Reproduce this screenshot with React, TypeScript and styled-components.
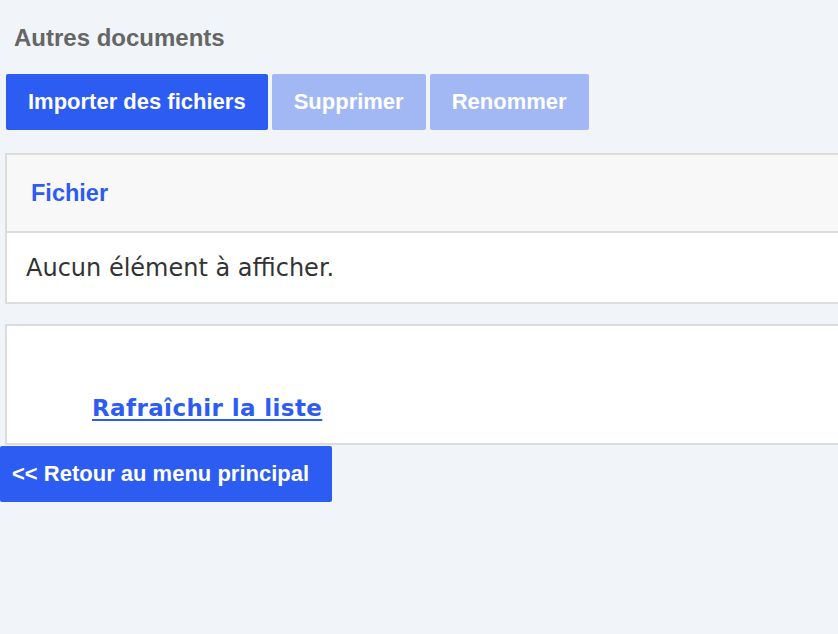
import React from 'react';
import styled, { createGlobalStyle } from 'styled-components';

const GlobalStyle = createGlobalStyle`
  html, body {
    margin: 0;
    padding: 0;
    background: #f1f5fa;
    overflow: hidden;
  }
  body {
    font-family: 'Liberation Sans', Arial, sans-serif;
  }
`;

const Page = styled.div`
  width: 838px;
  height: 634px;
  background: #f1f5fa;
  padding-top: 26px;
  box-sizing: border-box;
`;

const Title = styled.h3`
  margin: 0 0 24px 14px;
  font-size: 24px;
  line-height: 24px;
  font-weight: 700;
  color: #666666;
`;

const Toolbar = styled.div`
  display: flex;
  gap: 4px;
  margin-left: 6px;
  margin-bottom: 23px;
`;

const Button = styled.button<{ $disabled?: boolean }>`
  height: 56px;
  padding: 0 22px;
  border: none;
  border-radius: 2px;
  font-family: 'Liberation Sans', Arial, sans-serif;
  font-size: 22px;
  font-weight: 700;
  color: #ffffff;
  background: ${(p) => (p.$disabled ? '#a2b8f5' : '#2c5cf2')};
  cursor: ${(p) => (p.$disabled ? 'default' : 'pointer')};
`;

const Panel = styled.div`
  margin-left: 5px;
  width: 900px;
  border: 2px solid #dcdcdc;
  box-sizing: border-box;
  background: #ffffff;
`;

const HeaderRow = styled.div`
  height: 76px;
  display: flex;
  align-items: center;
  padding-left: 24px;
  background: #f8f8f8;
  border-bottom: 2px solid #dcdcdc;
  font-size: 23.5px;
  font-weight: 700;
  color: #2c5cf2;
`;

const EmptyRow = styled.div`
  height: 69px;
  display: flex;
  align-items: center;
  padding-left: 19px;
  font-family: 'DejaVu Sans', Verdana, sans-serif;
  font-size: 24px;
  color: #333333;
`;

const RefreshPanel = styled(Panel)`
  margin-top: 20px;
  height: 121px;
  display: flex;
  align-items: flex-end;
  padding: 0 0 22px 85px;
`;

const RefreshLink = styled.a`
  font-family: 'DejaVu Sans', Verdana, sans-serif;
  font-size: 23px;
  letter-spacing: 0.4px;
  font-weight: 700;
  color: #2c5cf2;
  text-decoration: underline;
  text-decoration-thickness: 2px;
  text-underline-offset: 3px;
  cursor: pointer;
`;

const BackButton = styled(Button)`
  display: block;
  margin-top: 1px;
  width: 332px;
  padding: 0 12px;
  text-align: left;
`;

export default function App() {
  return (
    <Page>
      <GlobalStyle />
      <Title>Autres documents</Title>
      <Toolbar>
        <Button>Importer des fichiers</Button>
        <Button $disabled>Supprimer</Button>
        <Button $disabled>Renommer</Button>
      </Toolbar>
      <Panel>
        <HeaderRow>Fichier</HeaderRow>
        <EmptyRow>Aucun élément à afficher.</EmptyRow>
      </Panel>
      <RefreshPanel>
        <RefreshLink>Rafraîchir la liste</RefreshLink>
      </RefreshPanel>
      <BackButton>&lt;&lt; Retour au menu principal</BackButton>
    </Page>
  );
}
